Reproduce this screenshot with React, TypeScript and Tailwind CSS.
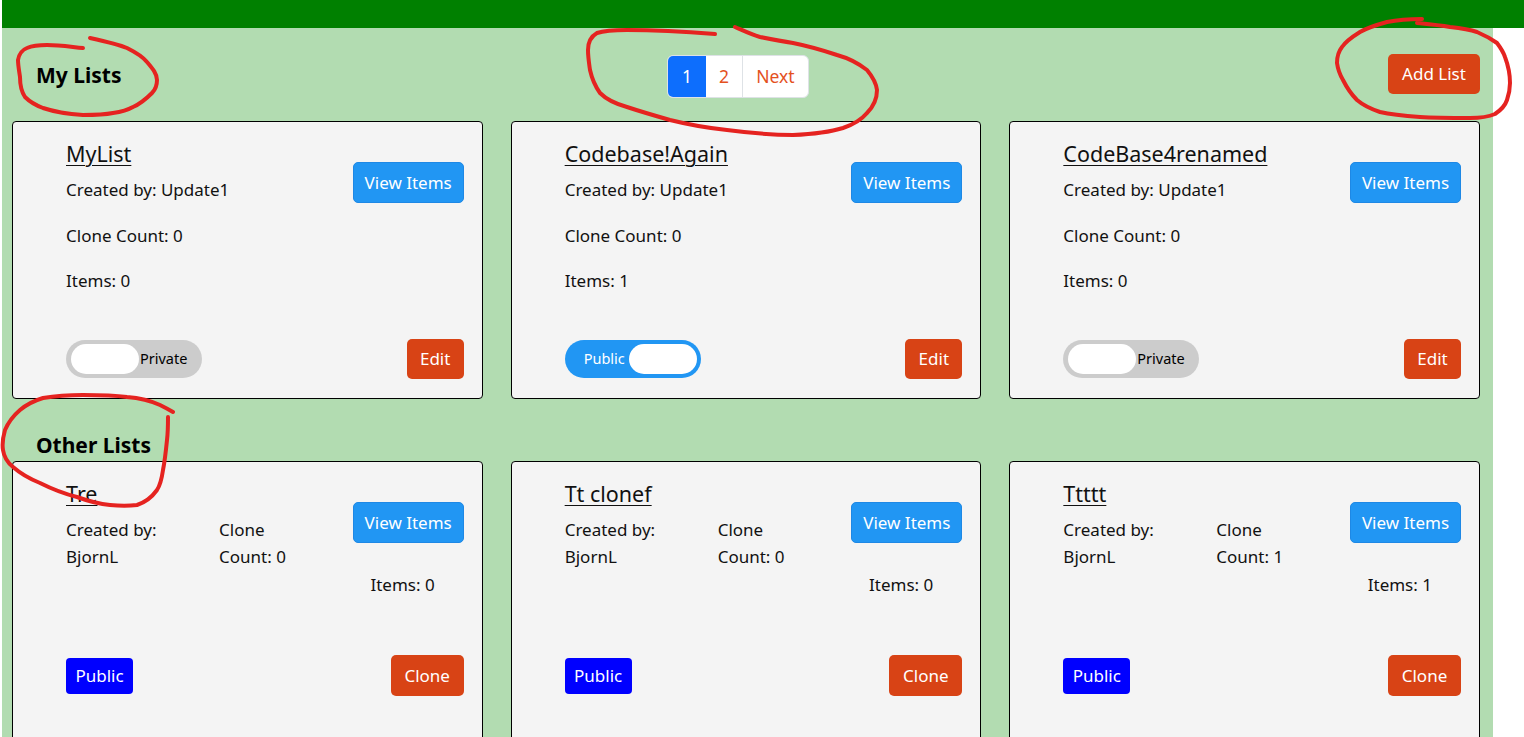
import React from "react";

type MyItem = { title: string; by: string; clone: number; items: number; pub: boolean };
type OtherItem = { title: string; by: string; clone: number; items: number };

const myLists: MyItem[] = [
  { title: "MyList", by: "Update1", clone: 0, items: 0, pub: false },
  { title: "Codebase!Again", by: "Update1", clone: 0, items: 1, pub: true },
  { title: "CodeBase4renamed", by: "Update1", clone: 0, items: 0, pub: false },
];

const others: OtherItem[] = [
  { title: "Tre", by: "BjornL", clone: 0, items: 0 },
  { title: "Tt clonef", by: "BjornL", clone: 0, items: 0 },
  { title: "Ttttt", by: "BjornL", clone: 1, items: 1 },
];

function ViewBtn() {
  return (
    <div className="w-[111px] h-[41px] rounded-[5px] bg-[#2196f3] border border-[#1e88e5] text-white text-[17px] flex items-center justify-center">
      View Items
    </div>
  );
}

function Toggle({ pub }: { pub: boolean }) {
  if (pub) {
    return (
      <div className="w-[136px] h-[38px] rounded-full bg-[#2196f3] flex items-center pl-[19px] pr-[4px] justify-between">
        <span className="text-white text-[14.5px]">Public</span>
        <div className="w-[68px] h-[30px] rounded-full bg-white" />
      </div>
    );
  }
  return (
    <div className="w-[136px] h-[38px] rounded-full bg-[#cccccc] flex items-center pl-[5px]">
      <div className="w-[68px] h-[30px] rounded-full bg-white" />
      <span className="text-black text-[14.5px] ml-[1px]">Private</span>
    </div>
  );
}

function MyCard({ d }: { d: MyItem }) {
  return (
    <div className="border border-black rounded-[4px] bg-[#f4f4f4] h-[278px] pl-[53px] pr-[18px] pt-[17px]">
      <div className="flex justify-between">
        <div>
          <div className="text-[21.5px] leading-[30px] underline underline-offset-[3px] decoration-1">{d.title}</div>
          <div className="text-[17px] leading-[27px] mt-[7px]">Created by: {d.by}</div>
          <div className="text-[17px] leading-[27px] mt-[19px]">Clone Count: {d.clone}</div>
          <div className="text-[17px] leading-[27px] mt-[18px]">Items: {d.items}</div>
        </div>
        <div className="pt-[23px]">
          <ViewBtn />
        </div>
      </div>
      <div className="flex justify-between items-center mt-[45px]">
        <Toggle pub={d.pub} />
        <div className="w-[57px] h-[40px] rounded-[5px] bg-[#d84315] text-white text-[17px] flex items-center justify-center">
          Edit
        </div>
      </div>
    </div>
  );
}

function OtherCard({ d }: { d: OtherItem }) {
  return (
    <div className="border border-black rounded-[4px] bg-[#f4f4f4] h-[300px] pl-[53px] pr-[18px] pt-[17px]">
      <div className="flex justify-between">
        <div>
          <div className="text-[21.5px] leading-[30px] underline underline-offset-[3px] decoration-1">{d.title}</div>
          <div className="flex mt-[7px] text-[17px] leading-[27px]">
            <div className="w-[153px]">
              <div>Created by:</div>
              <div>{d.by}</div>
            </div>
            <div className="w-[120px]">
              <div>Clone</div>
              <div>Count: {d.clone}</div>
            </div>
          </div>
        </div>
        <div className="pt-[23px] flex flex-col items-end">
          <ViewBtn />
          <div className="text-[17px] leading-[27px] mt-[28px] mr-[29px]">Items: {d.items}</div>
        </div>
      </div>
      <div className="flex justify-between items-center mt-[57px]">
        <div className="w-[67px] h-[36px] rounded-[4px] bg-[#0000ff] text-white text-[17px] flex items-center justify-center">
          Public
        </div>
        <div className="w-[73px] h-[41px] rounded-[5px] bg-[#d84315] text-white text-[17px] flex items-center justify-center">
          Clone
        </div>
      </div>
    </div>
  );
}

export default function App() {
  return (
    <div className="relative w-[1524px] h-[737px] overflow-hidden bg-white text-[#111] font-['Segoe_UI','Noto_Sans',sans-serif]">
      <div className="ml-[2px] h-[28px] bg-[#008000]" />
      <div className="ml-[2px] w-[1491px] bg-[#b2dcb1] pb-[20px]">
        <div className="h-[93px] flex items-center">
          <div className="w-[665px] shrink-0 pl-[34px] font-bold text-[21px] leading-[30px] text-black">My Lists</div>
          <div className="flex h-[43px] mt-[3px] rounded-[6px] overflow-hidden border border-[#dee2e6] bg-white text-[17.5px]">
            <div className="w-[38px] bg-[#0d6efd] text-white flex items-center justify-center">1</div>
            <div className="w-[37px] text-[#e4511e] flex items-center justify-center border-r border-[#dee2e6]">2</div>
            <div className="w-[65px] text-[#e4511e] flex items-center justify-center">Next</div>
          </div>
          <div className="flex-1 flex justify-end pr-[13px]">
            <div className="w-[92px] h-[40px] -mt-[2px] rounded-[5px] bg-[#d84315] text-white text-[17px] flex items-center justify-center">
              Add List
            </div>
          </div>
        </div>
        <div className="grid grid-cols-3 gap-[28px] pl-[10px] pr-[13px]">
          {myLists.map((d) => (
            <MyCard key={d.title} d={d} />
          ))}
        </div>
        <div className="h-[62px] pt-[31px] pl-[34px] font-bold text-[21px] leading-[30px] text-black">Other Lists</div>
        <div className="grid grid-cols-3 gap-[28px] pl-[10px] pr-[13px]">
          {others.map((d) => (
            <OtherCard key={d.title} d={d} />
          ))}
        </div>
      </div>
      <svg
        className="absolute left-0 top-0 pointer-events-none"
        width="1524"
        height="737"
        viewBox="0 0 1524 737"
        fill="none"
        stroke="#e52320"
        strokeWidth="4"
        strokeLinecap="round"
        strokeLinejoin="round"
      >
        <path d="M90 38 C108 42 120 45 127 48 C137 53 143 57 147 62 C153 69 157 74 157 80 C157 86 155 90 152 93 C145 100 140 104 133 107 C126 111 120 112 113 113 C103 115 93 115 83 115 C68 114 55 112 43 108 C35 105 29 101 25 97 C21 91 20 84 20 77 C19 70 18 65 18 60 C19 54 22 50 27 48 C34 45 40 45 47 45 C60 45 72 47 83 48" />
        <path d="M715 34 C690 32 660 30 627 30 C613 30 603 31 597 33 C590 37 588 43 588 50 C588 57 589 63 590 70 C592 79 595 86 600 93 C607 100 616 104 627 107 C642 112 656 116 670 120 C690 125 708 128 727 130 C750 133 772 135 793 135 C815 134 830 132 843 128 C855 124 862 119 867 113 C874 106 877 98 877 90 C876 82 872 76 867 70 C858 63 848 58 837 55 C822 50 808 46 793 43 C780 41 770 39 760 37 C750 34 742 30 735 27" />
        <path d="M1422 19 C1408 19 1397 20 1387 22 C1376 25 1367 28 1360 32 C1352 37 1346 41 1342 47 C1338 52 1337 58 1337 63 C1338 70 1340 75 1343 80 C1347 88 1351 94 1357 100 C1364 106 1371 109 1380 112 C1393 115 1406 116 1420 117 C1436 118 1453 118 1470 118 C1480 118 1488 117 1495 114 C1501 110 1505 106 1507 100 C1509 94 1510 89 1510 83 C1510 74 1508 65 1505 57 C1503 51 1500 47 1497 43 C1490 38 1484 35 1477 32 C1468 29 1459 28 1450 27 C1438 25 1427 24 1417 23" />
        <path d="M173 412 C168 409 164 407 160 405 C149 400 139 398 127 397 C112 395 98 395 83 395 C68 395 55 396 43 398 C33 401 26 405 20 410 C13 416 8 423 5 430 C3 437 2 444 3 450 C4 457 8 463 13 467 C21 474 30 479 40 483 C52 489 65 494 77 497 C88 501 99 504 110 505 C120 506 129 506 137 505 C146 502 152 497 157 490 C161 484 162 477 163 470 C165 460 166 450 167 440 C168 432 168 424 168 417" />
      </svg>
    </div>
  );
}
